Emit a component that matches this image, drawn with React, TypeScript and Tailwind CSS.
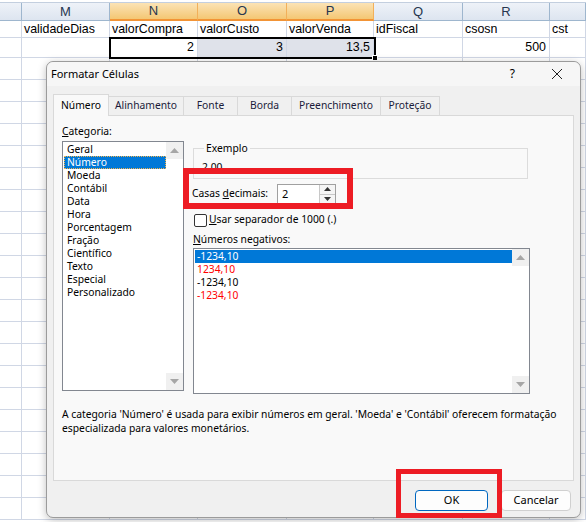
import React from 'react';

const cols = [22, 88, 88, 89, 87, 89, 87, 36];
const heads = ['', 'M', 'N', 'O', 'P', 'Q', 'R', ''];
const row1 = ['', 'validadeDias', 'valorCompra', 'valorCusto', 'valorVenda', 'idFiscal', 'csosn', 'cst'];
const row2 = ['', '', '2', '3', '13,5', '', '500', ''];

const categorias = [
  'Geral',
  'Número',
  'Moeda',
  'Contábil',
  'Data',
  'Hora',
  'Porcentagem',
  'Fração',
  'Científico',
  'Texto',
  'Especial',
  'Personalizado',
];

const tabs = [
  { label: 'Número', w: 'w-[56px]' },
  { label: 'Alinhamento', w: 'w-[75px]' },
  { label: 'Fonte', w: 'w-[54px]' },
  { label: 'Borda', w: 'w-[54px]' },
  { label: 'Preenchimento', w: 'w-[89px]' },
  { label: 'Proteção', w: 'w-[59px]' },
];

function Arrow({ up }: { up?: boolean }) {
  return (
    <svg width="9" height="5" viewBox="0 0 9 5">
      <path d={up ? 'M0 5 L4.5 0 L9 5 Z' : 'M0 0 L4.5 5 L9 0 Z'} fill="#a6a6a6" />
    </svg>
  );
}

function ScrollBar() {
  return (
    <div className="flex flex-col justify-between w-[17px] h-full">
      <div className="h-[17px] bg-[#f0f0f0] flex items-center justify-center">
        <Arrow up />
      </div>
      <div className="h-[17px] bg-[#f0f0f0] flex items-center justify-center">
        <Arrow />
      </div>
    </div>
  );
}

function Sheet() {
  return (
    <div className="font-['Liberation_Sans',Arial,sans-serif] text-[12.4px] text-black">
      <div className="h-[3px] bg-white border-b border-[#c3cfdf]" />
      <div className="flex h-[18px]">
        {heads.map((h, i) => {
          const sel = i >= 2 && i <= 4;
          return (
            <div
              key={i}
              style={{ width: cols[i] }}
              className={
                sel
                  ? 'shrink-0 flex items-center justify-center text-[13px] text-[#27364f] bg-gradient-to-b from-[#fbe3b5] to-[#f4c773] border-r border-[#f2b05a] border-b-2 border-b-[#f29436]'
                  : 'shrink-0 flex items-center justify-center text-[13px] text-[#27364f] bg-gradient-to-b from-[#eef2f8] to-[#dde5f0] border-r border-b border-[#9eb6ce]'
              }
            >
              {h}
            </div>
          );
        })}
      </div>
      <div className="flex h-[17px]">
        {row1.map((t, i) => (
          <div
            key={i}
            style={{ width: cols[i] }}
            className="shrink-0 px-[2px] flex items-center border-r border-b border-[#d0d7e5] whitespace-nowrap overflow-hidden"
          >
            {t}
          </div>
        ))}
      </div>
      <div className="flex h-[20px]">
        {row2.map((t, i) => (
          <div
            key={i}
            style={{ width: cols[i] }}
            className={
              'shrink-0 px-[3px] flex items-center justify-end border-r border-b border-[#d0d7e5] ' +
              (i === 3 || i === 4 ? 'bg-[#dfe2ea]' : 'bg-white')
            }
          >
            {t}
          </div>
        ))}
      </div>
      {Array.from({ length: 21 }).map((_, r) => (
        <div key={r} className="flex h-[22px]">
          {cols.map((w, i) => (
            <div key={i} style={{ width: w }} className="shrink-0 border-r border-b border-[#d0d7e5]" />
          ))}
        </div>
      ))}
    </div>
  );
}

function Dialog() {
  return (
    <div className="absolute left-[46px] top-[61px] w-[535px] h-[457px] bg-[#f0f0f0] border border-[#9b9b9b] rounded-[7px] shadow-[0_2px_8px_rgba(0,0,0,0.25)] flex flex-col font-['Noto_Sans',sans-serif] text-[10.3px] text-black">
      <div className="h-[24px] shrink-0 flex items-center pl-[4px] rounded-t-[7px] bg-[#f6f6f6]">
        <span className="text-[11px]">Formatar Células</span>
        <span className="ml-auto text-[12px] mr-[36px]">?</span>
        <svg width="12" height="12" viewBox="0 0 12 12" className="mr-[17px]">
          <path d="M1 1 L11 11 M11 1 L1 11" stroke="#222" strokeWidth="1" />
        </svg>
      </div>

      <div className="flex items-end ml-[6px] mt-[7px] h-[22px] shrink-0">
        {tabs.map((t, i) =>
          i === 0 ? (
            <div
              key={t.label}
              className={`${t.w} h-[22px] -mb-px z-10 flex items-center justify-center bg-[#f9f9f9] border border-b-0 border-[#d9d9d9]`}
            >
              {t.label}
            </div>
          ) : (
            <div
              key={t.label}
              className={`${t.w} h-[19px] flex items-center justify-center bg-[#f0f0f0] border border-l-0 border-[#d9d9d9] border-b-0 text-[#1b1b3a]`}
            >
              {t.label}
            </div>
          )
        )}
      </div>

      <div className="ml-[6px] w-[521px] h-[366px] shrink-0 border border-[#d9d9d9] bg-[#f9f9f9] pl-[8px] pt-[8px]">
        <div className="flex">
          <div className="w-[122px]">
            <div className="h-[14px] leading-[14px]">
              <span className="underline">C</span>ategoria:
            </div>
            <div className="mt-[3px] h-[250px] bg-white border border-[#828790] flex">
              <div className="flex-1 pt-[1px] pl-px">
                {categorias.map((c) => (
                  <div
                    key={c}
                    className={
                      c === 'Número'
                        ? 'h-[13px] leading-[11px] px-[2px] bg-[#0078d7] text-white border border-dotted border-[#f3b34b]'
                        : 'h-[13px] leading-[13px] px-[3px]'
                    }
                  >
                    {c}
                  </div>
                ))}
              </div>
              <ScrollBar />
            </div>
          </div>

          <div className="ml-[9px] w-[338px]">
            <fieldset className="mt-[17px] w-[335px] h-[38px] border border-[#dcdcdc] pl-[8px]">
              <legend className="ml-[2px] px-[2px] leading-[14px]">Exemplo</legend>
              <div className="mt-[5px] leading-[14px]">2,00</div>
            </fieldset>

            <div className="mt-[5px] h-[20px] flex items-center">
              <span className="w-[85px] -ml-px">
                Casas <span className="underline">d</span>ecimais:
              </span>
              <div className="w-[59px] h-[20px] bg-white border border-[#a0a0a0] flex">
                <span className="flex-1 pl-[4px] leading-[18px] text-[11px]">2</span>
                <div className="w-[16px] border-l border-[#c8c8c8] flex flex-col">
                  <div className="flex-1 flex items-center justify-center border-b border-[#c8c8c8] bg-[#f5f5f5]">
                    <svg width="7" height="4" viewBox="0 0 7 4">
                      <path d="M0 4 L3.5 0 L7 4 Z" fill="#333" />
                    </svg>
                  </div>
                  <div className="flex-1 flex items-center justify-center bg-[#f5f5f5]">
                    <svg width="7" height="4" viewBox="0 0 7 4">
                      <path d="M0 0 L3.5 4 L7 0 Z" fill="#333" />
                    </svg>
                  </div>
                </div>
              </div>
            </div>

            <div className="mt-[9px] h-[14px] flex items-center">
              <div className="w-[13px] h-[13px] ml-px border border-[#333] rounded-[2px] bg-white" />
              <span className="ml-[2px]">
                <span className="underline">U</span>sar separador de 1000 (.)
              </span>
            </div>

            <div className="mt-[5px] h-[14px] leading-[14px]">
              <span className="underline">N</span>úmeros negativos:
            </div>
            <div className="mt-[2px] w-[337px] h-[146px] bg-white border border-[#828790] flex">
              <div className="flex-1 pt-px pl-px">
                <div className="h-[13px] leading-[13px] px-[2px] bg-[#0078d7] text-white">-1234,10</div>
                <div className="h-[13px] leading-[13px] px-[2px] text-[#ff0000]">1234,10</div>
                <div className="h-[13px] leading-[13px] px-[2px]">-1234,10</div>
                <div className="h-[13px] leading-[13px] px-[2px] text-[#ff0000]">-1234,10</div>
              </div>
              <ScrollBar />
            </div>
          </div>
        </div>

        <p className="mt-[13px] leading-[14px] whitespace-nowrap">
          A categoria 'Número' é usada para exibir números em geral. 'Moeda' e 'Contábil' oferecem formatação
          <br />
          especializada para valores monetários.
        </p>
      </div>

      <div className="mt-[9px] flex justify-end pr-[9px] gap-[13px] text-[11px]">
        <button className="w-[73px] h-[21px] bg-[#fdfdfd] border border-[#0067c0] rounded-[4px]">OK</button>
        <button className="w-[70px] h-[21px] bg-[#fdfdfd] border border-[#d0d0d0] rounded-[4px]">Cancelar</button>
      </div>
    </div>
  );
}

export default function App() {
  return (
    <div className="relative w-[586px] h-[522px] overflow-hidden bg-white">
      <Sheet />

      {/* selection outline N2:P2 + fill handle */}
      <div className="absolute left-[109px] top-[37px] w-[267px] h-[22px] border-2 border-black" />
      <div className="absolute left-[372px] top-[55px] w-[6px] h-[6px] bg-black border border-white" />

      <Dialog />

      {/* annotation boxes */}
      <div className="absolute left-[183px] top-[168px] w-[170px] h-[41px] border-[6px] border-[#ed1c24]" />
      <div className="absolute left-[396px] top-[469px] w-[106px] h-[49px] border-[5px] border-[#ed1c24]" />
    </div>
  );
}
